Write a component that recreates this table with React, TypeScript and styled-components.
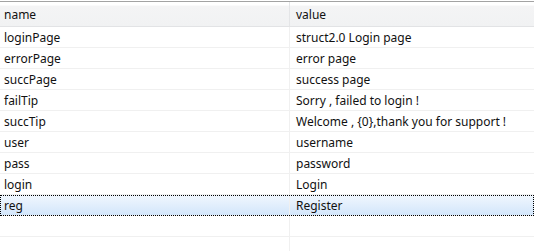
import React from 'react';
import styled, { createGlobalStyle } from 'styled-components';

type Entry = {
  name: string;
  value: string;
};

const entries: Entry[] = [
  { name: 'loginPage', value: 'struct2.0 Login page' },
  { name: 'errorPage', value: 'error page' },
  { name: 'succPage', value: 'success page' },
  { name: 'failTip', value: 'Sorry , failed to login !' },
  { name: 'succTip', value: 'Welcome , {0},thank you for support !' },
  { name: 'user', value: 'username' },
  { name: 'pass', value: 'password' },
  { name: 'login', value: 'Login' },
  { name: 'reg', value: 'Register' },
];

const GlobalStyle = createGlobalStyle`
    html, body {
        margin: 0;
        padding: 0;
        background: #ffffff;
    }
    body {
        font-family: "Noto Sans", "Noto Sans CJK SC", sans-serif;
        font-size: 12px;
        color: #111111;
    }
`;

const Table = styled.div`
    width: 534px;
    height: 251px;
    padding-top: 1px;
    box-sizing: border-box;
    overflow: hidden;
    background: #ffffff;
`;

const Header = styled.div`
    display: grid;
    grid-template-columns: 290px 1fr;
    height: 24px;
    border-top: 1px solid #a3a3a3;
    border-bottom: 1px solid #e2e3e5;
    background: linear-gradient(#ffffff 0%, #ffffff 12%, #f4f4f5 18%, #f1f2f3 100%);
`;

const HeaderCell = styled.div<{ last?: boolean }>`
    display: flex;
    align-items: center;
    padding-left: ${props => (props.last ? '6px' : '4px')};
    border-right: ${props => (props.last ? 'none' : '1px solid #e4e5e7')};
`;

const Row = styled.div<{ selected?: boolean }>`
    display: grid;
    grid-template-columns: 290px 1fr;
    height: 21px;
    box-sizing: border-box;
    border-bottom: 1px solid #f0f0f0;
    background: ${props =>
      props.selected ? 'linear-gradient(#f1f7fe 0%, #d3e6fb 100%)' : 'transparent'};
    outline: ${props => (props.selected ? '1px dotted #000000' : 'none')};
    outline-offset: -1px;
`;

const Cell = styled.div<{ last?: boolean }>`
    display: flex;
    align-items: center;
    white-space: nowrap;
    padding-left: ${props => (props.last ? '6px' : '4px')};
    border-right: ${props => (props.last ? 'none' : '1px solid #f0f0f0')};
`;

const PropertyTable = ({ rows, selected }: { rows: Entry[]; selected: number }) => (
  <Table>
    <Header>
      <HeaderCell>name</HeaderCell>
      <HeaderCell last>value</HeaderCell>
    </Header>
    {rows.map((row, idx) => (
      <Row key={row.name} selected={idx === selected}>
        <Cell>{row.name}</Cell>
        <Cell last>{row.value}</Cell>
      </Row>
    ))}
    <Row>
      <Cell />
      <Cell last />
    </Row>
    <Row>
      <Cell />
      <Cell last />
    </Row>
  </Table>
);

export default function App() {
  return (
    <>
      <GlobalStyle />
      <PropertyTable rows={entries} selected={entries.length - 1} />
    </>
  );
}
